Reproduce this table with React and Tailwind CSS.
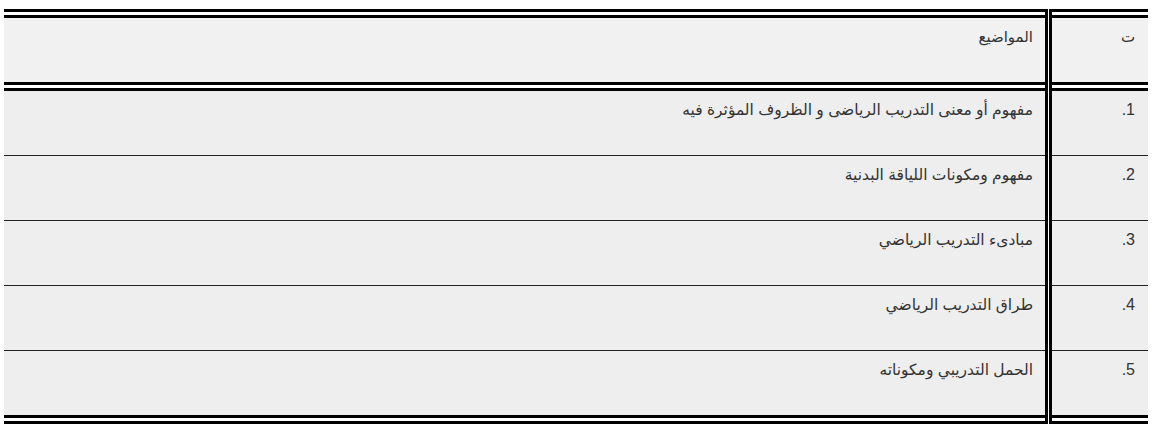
const topics = [
  { n: "1.", t: "مفهوم أو معنى التدريب الرياضى و الظروف المؤثرة فيه" },
  { n: "2.", t: "مفهوم ومكونات اللياقة البدنية" },
  { n: "3.", t: "مبادىء التدريب الرياضي" },
  { n: "4.", t: "طراق التدريب الرياضي" },
  { n: "5.", t: "الحمل التدريبي ومكوناته" },
];

const font = { fontFamily: '"Liberation Sans", Arial, "DejaVu Sans", sans-serif' };

function Column({ width, head, values, textClass, headClass }) {
  return (
    <div className={`flex flex-col ${width}`}>
      <div
        dir="rtl"
        className="h-[82px] border-y-[9px] border-double border-black bg-[#f1f1f1] bg-clip-padding pt-[7px] pr-[12px]"
      >
        <span className={headClass}>{head}</span>
      </div>
      {values.map((v, i) => (
        <div
          key={i}
          dir="rtl"
          className={
            i === values.length - 1
              ? "h-[73px] border-b-[9px] border-double border-black bg-[#eeeeee] bg-clip-padding pt-[7px] pr-[12px]"
              : "h-[65px] border-b border-[#222] bg-[#eeeeee] pt-[7px] pr-[12px]"
          }
        >
          <span className={textClass}>{v}</span>
        </div>
      ))}
    </div>
  );
}

export default function App() {
  return (
    <div className="bg-white w-[1154px] h-[427px] pt-[9px]" style={font}>
      <div className="ml-[4px] w-[1144px] flex">
        <Column
          width="w-[1041px]"
          head="المواضيع"
          values={topics.map((r) => r.t)}
          headClass="text-[15px] leading-[22px] text-[#333]"
          textClass="text-[15.5px] leading-[22px] text-[#333]"
        />
        {/* double vertical rule between columns */}
        <div className="w-[7px] self-stretch border-x-[3px] border-black bg-white" />
        <Column
          width="w-[96px] [&>div]:pr-[13px]"
          head="ت"
          values={topics.map((r) => r.n)}
          headClass="text-[15px] leading-[22px] text-[#333]"
          textClass="text-[16px] leading-[22px] text-[#333]"
        />
      </div>
    </div>
  );
}
